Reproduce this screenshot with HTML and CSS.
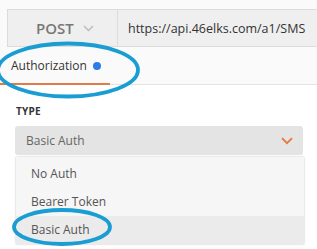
FILE: index.html
```html
<!DOCTYPE html>
<html lang="en">
<head>
    <meta charset="UTF-8">
    <title>Request Auth</title>
    <link rel="stylesheet" href="styles.css">
</head>
<body>
    <div class="request">
        <div class="url-bar">
            <div class="method">POST
                <svg class="method-caret" width="11" height="7" viewBox="0 0 11 7"><path d="M1 1l4.5 4.5L10 1" fill="none" stroke="#bbb" stroke-width="1.4"/></svg>
            </div>
            <div class="url">https://api.46elks.com/a1/SMS</div>
        </div>
    </div>

    <div class="tabs">
        <div class="tab active">Authorization <span class="dot"></span></div>
    </div>

    <div class="auth">
        <div class="field-label">TYPE</div>
        <div class="select">
            <span>Basic Auth</span>
            <svg width="12" height="8" viewBox="0 0 12 8"><path d="M1 1.2l5 5 5-5" fill="none" stroke="#e8773f" stroke-width="1.8"/></svg>
        </div>
        <ul class="menu">
            <li>No Auth</li>
            <li>Bearer Token</li>
            <li class="selected">Basic Auth</li>
        </ul>
    </div>

    <!-- annotation rings drawn over the screenshot -->
    <svg class="ring ring-tab" width="150" height="62" viewBox="0 0 150 62"><ellipse cx="74" cy="30" rx="70" ry="26.5" fill="none" stroke="#1a9dd2" stroke-width="3.8"/></svg>
    <svg class="ring ring-item" width="104" height="42" viewBox="0 0 104 42"><ellipse cx="51" cy="20" rx="48" ry="17" fill="none" stroke="#1a9dd2" stroke-width="3.8"/></svg>
</body>
</html>
```

FILE: styles.css
```css
body {
    margin: 0;
    font-family: "Open Sans", Arial, sans-serif;
    background-color: #fff;
    color: #333;
    position: relative;
    height: 249px;
    overflow: hidden;
}
.request {
    padding: 9px 0 0 7px;
    background: #fafafa;
}
.url-bar {
    display: flex;
    height: 36px;
    border: 1px solid #dcdcdc;
    border-right: none;
    background: #efefef;
}
.method {
    width: 109px;
    border-right: 1px solid #dcdcdc;
    display: flex;
    align-items: center;
    gap: 9px;
    font-size: 15px;
    font-weight: 600;
    color: #777;
    padding-left: 28px;
    box-sizing: border-box;
    width: 110px;
}
.url {
    display: flex;
    align-items: center;
    padding-left: 10px;
    font-size: 12.5px;
    color: #333;
}
.tabs {
    background: #fafafa;
    height: 37px;
    border-bottom: 1px solid #e3e3e3;
    display: flex;
}
.tab {
    width: 99px;
    padding-left: 11px;
    display: flex;
    align-items: center;
    font-size: 12px;
    color: #333;
}
.tab.active {
    border-bottom: 2px solid #e07c47;
    margin-bottom: -1px;
}
.dot {
    width: 8px;
    height: 8px;
    border-radius: 50%;
    background: #2f7ce8;
    margin-left: 6px;
    margin-top: 2px;
}
.auth {
    padding: 19px 14px 0 15px;
}
.field-label {
    font-size: 10px;
    font-weight: 700;
    color: #333;
    letter-spacing: 0.2px;
    padding-left: 1px;
    margin-bottom: 8px;
}
.select {
    height: 29px;
    background: #e4e4e4;
    border-radius: 3px;
    display: flex;
    align-items: center;
    justify-content: space-between;
    padding: 0 10px 0 11px;
    font-size: 12px;
    color: #666;
}
.menu {
    list-style: none;
    margin: 2px -1px 0 1px;
    padding: 3px 0 0 0;
    background: #f6f6f6;
    box-shadow: 0 0 2px rgba(0, 0, 0, 0.25);
}
.menu li {
    height: 28px;
    line-height: 28px;
    padding-left: 15px;
    font-size: 12px;
    color: #555;
}
.menu li.selected {
    background: #ebebeb;
}
.ring {
    position: absolute;
}
.ring-tab {
    left: -6px;
    top: 40px;
}
.ring-item {
    left: 11px;
    top: 207px;
}
```
